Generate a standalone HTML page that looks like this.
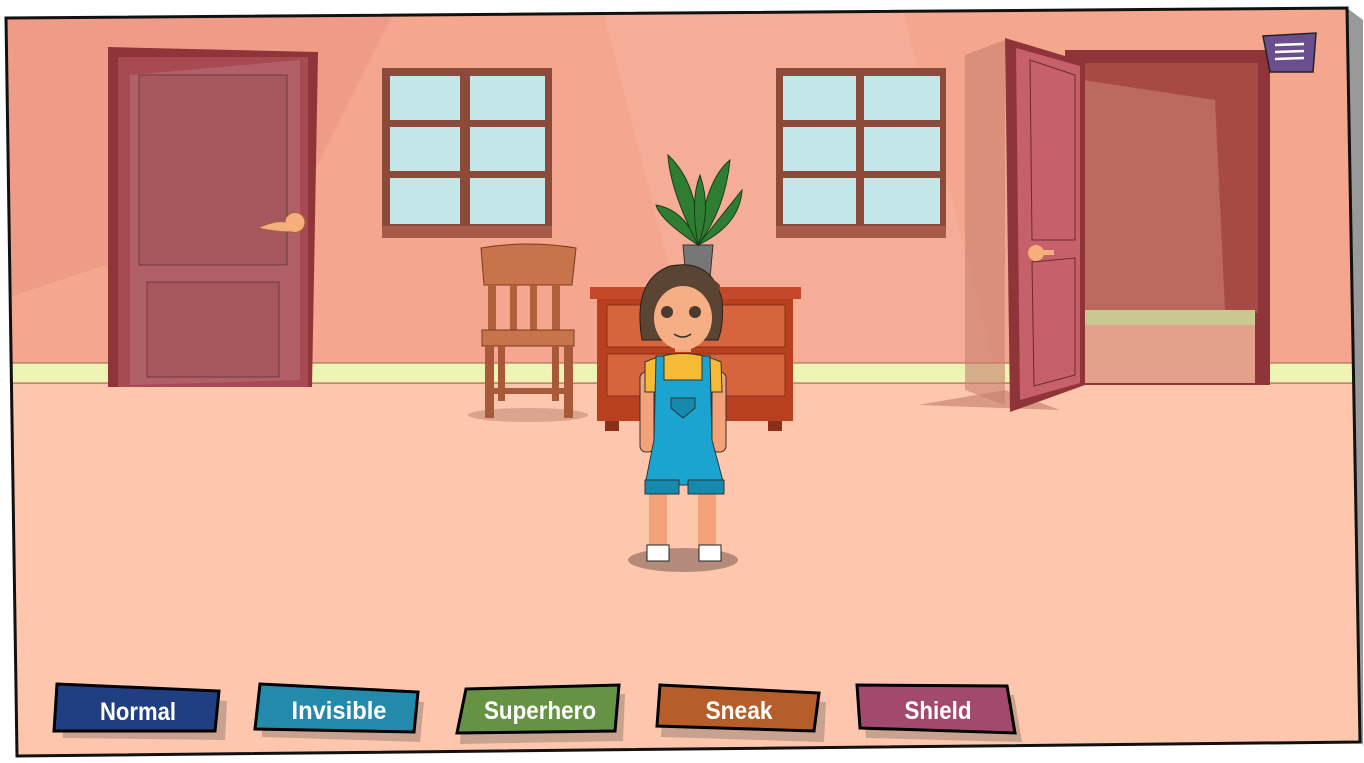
<!DOCTYPE html>
<html><head><meta charset="utf-8"><style>
html,body{margin:0;padding:0;background:#fff;width:1364px;height:763px;overflow:hidden}
svg{display:block}
.bt{font-family:"Comic Sans MS","Liberation Sans Narrow","Liberation Sans",sans-serif;font-weight:bold;font-size:25px;fill:#fff;text-anchor:middle}
</style></head><body>
<svg width="1364" height="763" viewBox="0 0 1364 763" xmlns="http://www.w3.org/2000/svg">
<defs><clipPath id="fr"><polygon points="6,18 1347,8 1360,742 17,756"/></clipPath></defs>
<polygon points="1347,8 1363,20 1363,745 1360,742" fill="#999"/>
<g clip-path="url(#fr)">
<rect x="0" y="0" width="1364" height="385" fill="#f4a68e"/>
<polygon points="0,0 400,0 300,200 0,300" fill="#e99683" opacity=".6"/>
<polygon points="600,0 900,0 1000,385 700,385" fill="#f8b3a0" opacity=".5"/>
<rect x="0" y="363" width="1364" height="20" fill="#eef2b3"/>
<line x1="0" y1="363" x2="1364" y2="363" stroke="#a06050" stroke-width="1"/>
<line x1="0" y1="383" x2="1364" y2="383" stroke="#a06050" stroke-width="1"/>
<rect x="0" y="384" width="1364" height="380" fill="#fec7ad"/>
<!-- left door -->
<polygon points="108,47 318,52 312,387 108,387" fill="#8f3438"/>
<rect x="118" y="57" width="190" height="330" fill="#a84a52"/>
<rect x="139" y="75" width="148" height="190" fill="#9a4048" stroke="#5a2024"/>
<rect x="147" y="282" width="132" height="95" fill="#9a4048" stroke="#5a2024"/>
<polygon points="130,75 300,60 300,380 130,385" fill="#fff" opacity=".12"/>
<path d="M258,228 Q275,220 285,222 A10,10 0 1 1 292,232 Q275,232 258,228Z" fill="#f6ae7a" stroke="#a06040"/>
<!-- windows -->
<g>
<rect x="382" y="68" width="170" height="160" fill="#8b4a3a"/>
<rect x="390" y="76" width="70" height="44" fill="#c3e7e8"/><rect x="470" y="76" width="75" height="44" fill="#c3e7e8"/>
<rect x="390" y="127" width="70" height="44" fill="#c3e7e8"/><rect x="470" y="127" width="75" height="44" fill="#c3e7e8"/>
<rect x="390" y="178" width="70" height="46" fill="#c3e7e8"/><rect x="470" y="178" width="75" height="46" fill="#c3e7e8"/>
<rect x="382" y="226" width="170" height="12" fill="#a85a48"/>
</g>
<g>
<rect x="776" y="68" width="170" height="160" fill="#8b4a3a"/>
<rect x="783" y="76" width="73" height="44" fill="#c3e7e8"/><rect x="864" y="76" width="76" height="44" fill="#c3e7e8"/>
<rect x="783" y="127" width="73" height="44" fill="#c3e7e8"/><rect x="864" y="127" width="76" height="44" fill="#c3e7e8"/>
<rect x="783" y="178" width="73" height="46" fill="#c3e7e8"/><rect x="864" y="178" width="76" height="46" fill="#c3e7e8"/>
<rect x="776" y="226" width="170" height="12" fill="#a85a48"/>
</g>
<!-- chair -->
<ellipse cx="528" cy="415" rx="60" ry="7" fill="#d9a58f"/>
<path d="M481,248 Q528,240 576,248 L572,285 L484,285Z" fill="#c8744a" stroke="#7a3a20"/>
<rect x="488" y="285" width="8" height="50" fill="#b0603a"/><rect x="510" y="285" width="7" height="50" fill="#b0603a"/><rect x="530" y="285" width="7" height="50" fill="#b0603a"/><rect x="552" y="285" width="8" height="50" fill="#b0603a"/>
<rect x="482" y="330" width="92" height="16" fill="#c8744a" stroke="#7a3a20"/>
<rect x="485" y="346" width="9" height="72" fill="#a85a38"/><rect x="564" y="346" width="9" height="72" fill="#a85a38"/>
<rect x="498" y="346" width="7" height="55" fill="#a85a38"/><rect x="552" y="346" width="7" height="55" fill="#a85a38"/>
<rect x="494" y="388" width="70" height="6" fill="#a85a38"/>
<!-- dresser -->
<rect x="590" y="287" width="211" height="12" fill="#c4482a"/>
<rect x="597" y="299" width="196" height="122" fill="#b8401f"/>
<rect x="607" y="305" width="178" height="42" fill="#d6653e" stroke="#8a3018"/>
<rect x="607" y="354" width="178" height="42" fill="#d6653e" stroke="#8a3018"/>
<rect x="605" y="421" width="14" height="10" fill="#8a3018"/><rect x="768" y="421" width="14" height="10" fill="#8a3018"/>
<!-- plant -->
<path d="M683,245 L713,245 L710,278 L686,278Z" fill="#777" stroke="#333"/>
<g fill="#2e7d32" stroke="#173d18">
<path d="M698,245 Q660,220 656,205 Q685,210 698,245Z"/>
<path d="M698,245 Q670,190 668,155 Q700,185 698,245Z"/>
<path d="M698,245 Q705,180 730,160 Q725,210 698,245Z"/>
<path d="M698,245 Q730,205 742,190 Q740,225 698,245Z"/>
<path d="M698,245 Q690,200 700,175 Q712,210 698,245Z"/>
</g>
<!-- right doorway -->
<polygon points="918,405 1005,390 1060,410" fill="#c07a6a" opacity=".6"/>
<polygon points="965,55 1005,40 1005,405 965,390" fill="#c8806e" opacity=".6"/>
<rect x="1065" y="50" width="205" height="335" fill="#8f3438"/>
<rect x="1083" y="63" width="175" height="250" fill="#a74a44"/>
<polygon points="1083,80 1215,100 1225,310 1083,310" fill="#bd6a5e"/>
<rect x="1083" y="310" width="172" height="15" fill="#c8c890"/>
<rect x="1083" y="325" width="172" height="58" fill="#e2a088"/>
<polygon points="1005,38 1085,62 1085,385 1010,412" fill="#8f3438"/>
<polygon points="1016,48 1080,66 1080,383 1020,400" fill="#c6606a"/>
<polygon points="1030,60 1075,75 1075,240 1032,240" fill="none" stroke="#6a2a30"/>
<polygon points="1032,262 1075,258 1075,375 1034,386" fill="none" stroke="#6a2a30"/>
<circle cx="1036" cy="253" r="8" fill="#f6ae7a"/><rect x="1036" y="250" width="18" height="5" fill="#f6ae7a"/>
<!-- girl -->
<ellipse cx="683" cy="560" rx="55" ry="12" fill="#b48a7a"/>
<rect x="649" y="490" width="18" height="55" fill="#f4a27a"/><rect x="698" y="490" width="18" height="55" fill="#f4a27a"/>
<path d="M647,545 h22 v16 h-22z" fill="#fff" stroke="#222"/><path d="M699,545 h22 v16 h-22z" fill="#fff" stroke="#222"/>
<rect x="640" y="372" width="14" height="80" rx="6" fill="#f4a27a" stroke="#333"/><rect x="712" y="372" width="14" height="80" rx="6" fill="#f4a27a" stroke="#333"/>
<path d="M645,362 Q683,345 721,362 L722,392 L645,392Z" fill="#f5bb35" stroke="#333"/>
<path d="M656,356 L664,356 L664,380 L702,380 L702,356 L710,356 L712,440 L724,485 L645,485 L654,440Z" fill="#1aa4cf" stroke="#333"/>
<rect x="645" y="480" width="34" height="14" fill="#1689ae" stroke="#333"/><rect x="688" y="480" width="36" height="14" fill="#1689ae" stroke="#333"/>
<path d="M671,398 h24 v10 l-12,10 l-12,-10z" fill="#1689ae" stroke="#333"/>
<rect x="675" y="330" width="16" height="22" fill="#f4a27a"/>
<path d="M642,340 Q632,280 670,266 Q712,258 722,300 Q724,325 718,340 Z" fill="#5a4534" stroke="#2a1f18"/>
<ellipse cx="683" cy="318" rx="29" ry="32" fill="#f6ae84"/>
<path d="M650,305 Q660,280 690,282 Q712,285 718,300 L720,285 Q700,266 670,270 Q648,280 650,305Z" fill="#5a4534"/>
<circle cx="667" cy="312" r="6" fill="#4a3a30"/><circle cx="695" cy="312" r="6" fill="#4a3a30"/>
<path d="M674,334 Q683,340 691,334" fill="none" stroke="#333" stroke-width="1.5"/>
<!-- buttons -->
<g>
<polygon points="60,694 227,701 225,740 63,738" fill="#c9a18f"/>
<polygon points="57,684 219,691 215,731 54,731" fill="#203f82" stroke="#000" stroke-width="3"/>
<text class="bt" x="138" y="720" textLength="76" lengthAdjust="spacingAndGlyphs">Normal</text>
<polygon points="262,694 424,702 420,742 262,737" fill="#c9a18f"/>
<polygon points="260,684 418,692 414,732 255,729" fill="#238aab" stroke="#000" stroke-width="3"/>
<text class="bt" x="339" y="719" textLength="95" lengthAdjust="spacingAndGlyphs">Invisible</text>
<polygon points="463,700 625,694 623,741 460,744" fill="#c9a18f"/>
<polygon points="466,689 619,685 615,731 457,733" fill="#659343" stroke="#000" stroke-width="3"/>
<text class="bt" x="540" y="719" textLength="112" lengthAdjust="spacingAndGlyphs">Superhero</text>
<polygon points="664,694 826,702 824,742 661,737" fill="#c9a18f"/>
<polygon points="660,685 819,693 814,731 657,726" fill="#b65e29" stroke="#000" stroke-width="3"/>
<text class="bt" x="739" y="719" textLength="67" lengthAdjust="spacingAndGlyphs">Sneak</text>
<polygon points="862,695 1014,695 1022,742 866,738" fill="#c9a18f"/>
<polygon points="857,685 1007,686 1015,733 860,728" fill="#a4496e" stroke="#000" stroke-width="3"/>
<text class="bt" x="938" y="719" textLength="67" lengthAdjust="spacingAndGlyphs">Shield</text>
</g>
<!-- menu -->
<polygon points="1263,36 1316,33 1313,72 1270,72" fill="#6b4f8c" stroke="#222" stroke-width="1.5"/>
<g stroke="#fff" stroke-width="2.5"><line x1="1275" y1="45" x2="1304" y2="44"/><line x1="1275" y1="52" x2="1304" y2="51"/><line x1="1275" y1="59" x2="1304" y2="58"/></g>
</g>
<polygon points="6,18 1347,8 1360,742 17,756" fill="none" stroke="#111" stroke-width="3"/>
</svg>
</body></html>
